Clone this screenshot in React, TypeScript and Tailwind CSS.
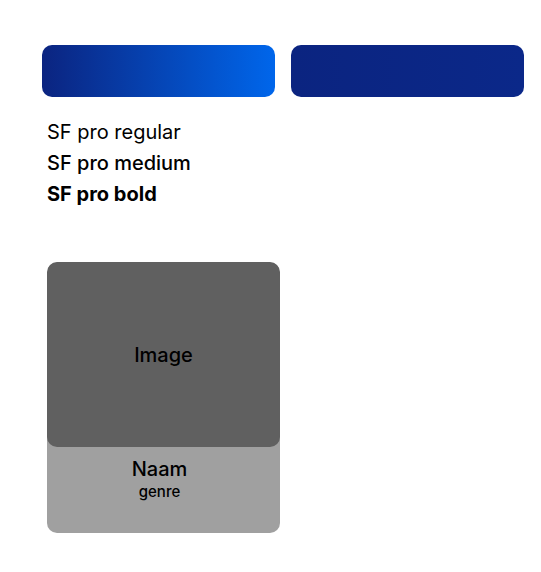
export default function App() {
  return (
    <main className="min-h-screen bg-white px-[42px] pt-[45px] pb-[39px] font-['Inter',sans-serif] text-black">
      <div className="-mr-[25px] grid grid-cols-2 gap-4">
        <div className="h-[52px] rounded-[10px] bg-linear-to-r/srgb from-[#0b2480] to-[#0066eb]" />
        <div className="h-[52px] rounded-[10px] bg-linear-to-r/srgb from-[#0b2480] to-[#0b2889]" />
      </div>
      <section className="mt-5 ml-[5px] text-xl leading-[31px]">
        <p className="font-normal">SF pro regular</p>
        <p className="font-medium">SF pro medium</p>
        <p className="font-bold">SF pro bold</p>
      </section>
      <article className="mt-[52px] ml-[5px] w-[233px] overflow-hidden rounded-[10px] bg-[#a0a0a0] text-center font-medium">
        <div className="flex h-[185px] items-center justify-center rounded-[10px] bg-[#606060] text-xl">Image</div>
        <div className="h-[86px] pt-[10px] pr-2">
          <h2 className="text-xl leading-6">Naam</h2>
          <p className="text-[15px] leading-[22px]">genre</p>
        </div>
      </article>
    </main>
  );
}
